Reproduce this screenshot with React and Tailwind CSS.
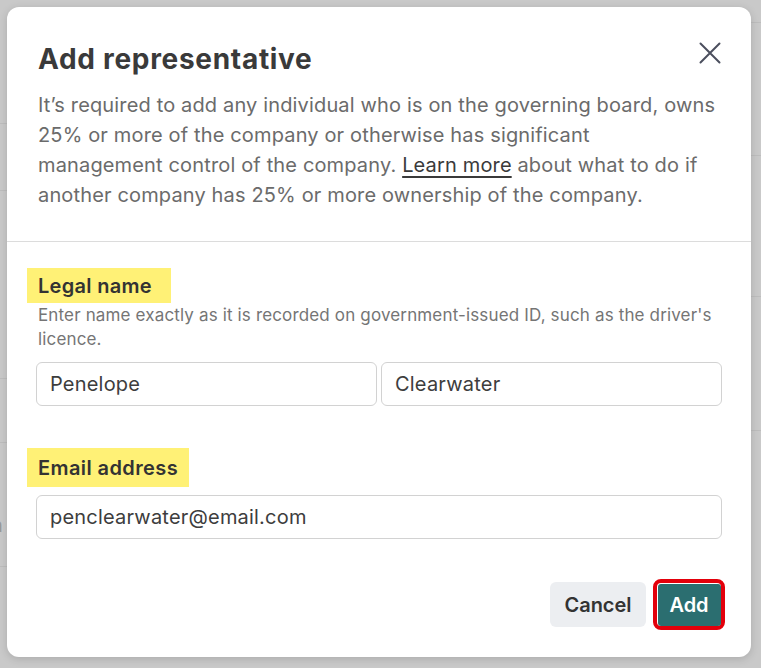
export default function App() {
  const font = { fontFamily: 'Inter, "Noto Sans", sans-serif' };
  return (
    <div className="relative w-[761px] h-[668px] overflow-hidden bg-[#c9c9c9]" style={font}>
      {/* faint background page lines */}
      <div className="absolute left-0 top-[123px] w-[7px] h-px bg-[#bdbdbd]" />
      <div className="absolute left-0 top-[190px] w-[7px] h-px bg-[#bdbdbd]" />
      <div className="absolute left-0 top-[378px] w-[7px] h-px bg-[#bdbdbd]" />
      <div className="absolute left-0 top-[442px] w-[7px] h-px bg-[#bdbdbd]" />
      <div className="absolute left-0 top-[566px] w-[7px] h-px bg-[#bdbdbd]" />
      <div className="absolute right-0 top-[22px] w-[10px] h-px bg-[#bdbdbd]" />
      <div className="absolute right-0 top-[155px] w-[10px] h-px bg-[#bdbdbd]" />
      <div className="absolute right-0 top-[296px] w-[10px] h-px bg-[#bdbdbd]" />
      <div className="absolute right-0 top-[430px] w-[10px] h-px bg-[#bdbdbd]" />
      <div className="absolute left-0 top-[515px] text-[20px] text-[#9a9a9a] leading-none -ml-[9px]">n</div>

      <div className="relative ml-[7px] mt-[7px] w-[744px] h-[650px] bg-white rounded-[12px] shadow-[0_2px_8px_rgba(0,0,0,0.15)] flex flex-col">
        {/* header */}
        <div className="pl-[31px] pr-[30px] pt-[34px] pb-[31px] border-b border-[#dcdcdc] flex flex-col gap-[13px]">
          <div className="flex items-start justify-between">
            <h1 className="text-[28px] leading-[36px] font-bold text-[#3a3a3a] tracking-[0.7px]">Add representative</h1>
            <button className="mt-[1px] w-[22px] h-[22px] flex items-center justify-center">
              <svg width="22" height="22" viewBox="0 0 22 22" fill="none" stroke="#4b4f5e" strokeWidth="2" strokeLinecap="round">
                <path d="M1.5 1.5 L20.5 20.5 M20.5 1.5 L1.5 20.5" />
              </svg>
            </button>
          </div>
          <p className="text-[20px] leading-[30px] text-[#6b6b6b] tracking-[0.15px] -mr-[4px]">
            It’s required to add any individual who is on the governing board, owns
            <br />
            25% or more of the company or otherwise has significant
            <br />
            management control of the company.{' '}
            <span className="underline underline-offset-[4px] text-[#3a3a3a]">Learn more</span> about what to do if
            <br />
            another company has 25% or more ownership of the company.
          </p>
        </div>

        {/* body */}
        <div className="px-[29px] pt-[26px] flex flex-col">
          <div className="-ml-[9px]">
            <span className="inline-block bg-[#fff176] h-[35px] pl-[11px] pr-[19px] text-[20px] leading-[37px] font-semibold text-[#333] tracking-[0.3px]">Legal name</span>
          </div>
          <p className="text-[17px] leading-[24px] text-[#757575] pl-[2px] tracking-[0.15px]">
            Enter name exactly as it is recorded on government-issued ID, such as the driver's licence.
          </p>
          <div className="mt-[11px] flex gap-[4px]">
            <div className="flex-1 h-[44px] border border-[#d2d2d2] rounded-[6px] flex items-center px-[13px] text-[20px] text-[#3d3d3d] tracking-[0.2px]">Penelope</div>
            <div className="flex-1 h-[44px] border border-[#d2d2d2] rounded-[6px] flex items-center px-[13px] text-[20px] text-[#3d3d3d] tracking-[0.2px]">Clearwater</div>
          </div>

          <div className="-ml-[9px] mt-[42px]">
            <span className="inline-block bg-[#fff176] h-[39px] pl-[11px] pr-[11px] text-[20px] leading-[41px] font-semibold text-[#333] tracking-[0.4px]">Email address</span>
          </div>
          <div className="mt-[8px] h-[44px] border border-[#d2d2d2] rounded-[6px] flex items-center px-[13px] text-[20px] text-[#3d3d3d] tracking-[0.2px]">penclearwater@email.com</div>
        </div>

        {/* footer */}
        <div className="mt-auto mb-[27px] pr-[26px] flex justify-end items-center gap-[7px]">
          <button className="w-[96px] h-[45px] rounded-[6px] bg-[#eceef1] text-[20px] font-semibold text-[#333]">Cancel</button>
          <div className="w-[72px] h-[51px] rounded-[8px] border-[4px] border-[#e3000b] flex items-center justify-center">
            <button className="w-[63px] h-[42px] rounded-[3px] bg-[#2b6e70] text-[20px] font-semibold text-white">Add</button>
          </div>
        </div>
      </div>
    </div>
  );
}
